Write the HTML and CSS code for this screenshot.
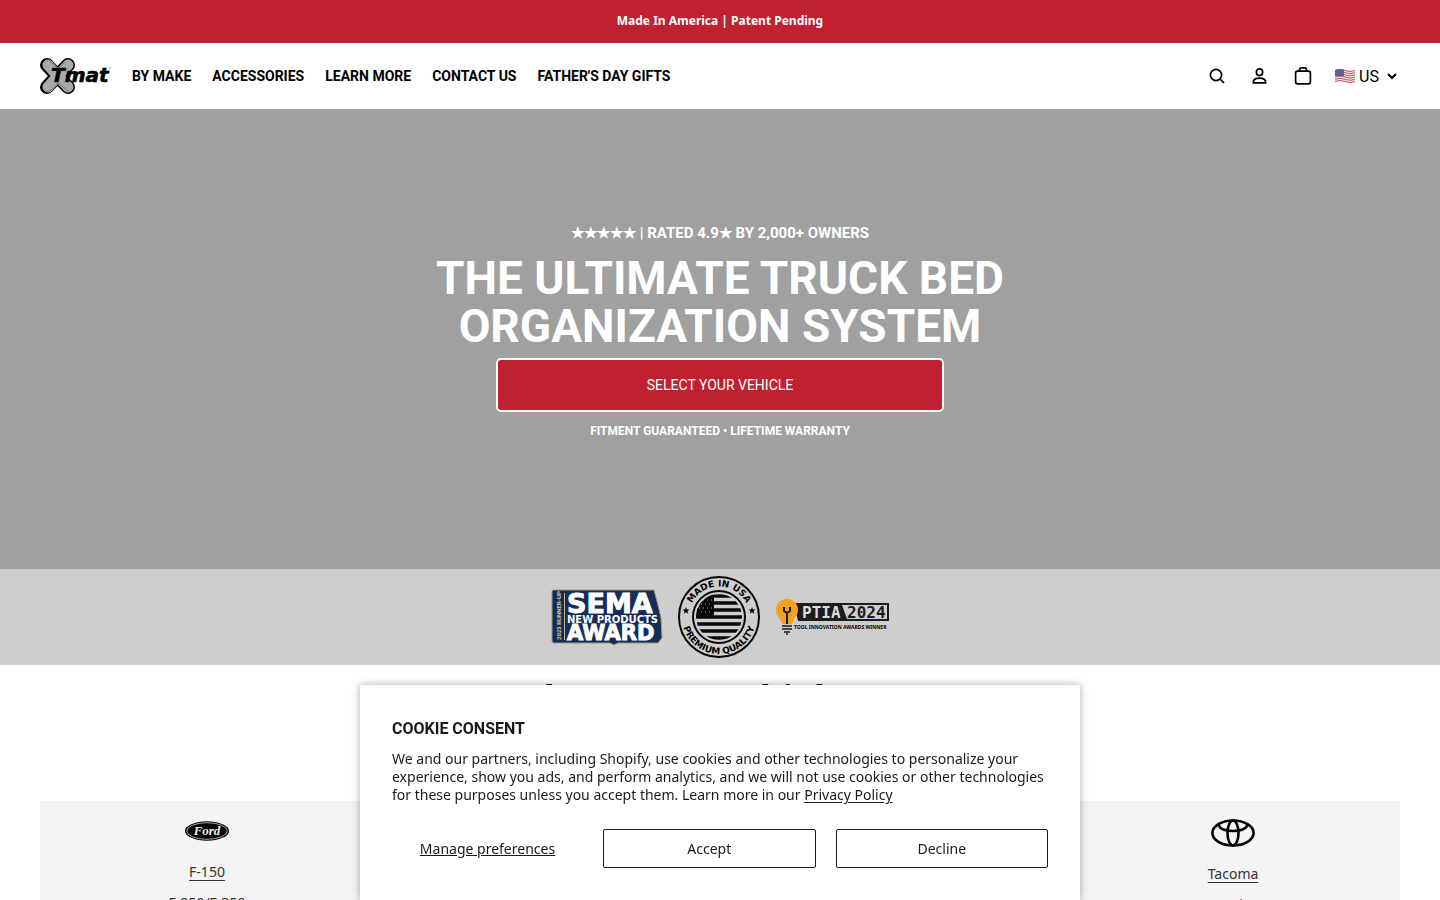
FILE: index.html
```
<!DOCTYPE html>
<html lang="en">
<head>
    <meta charset="UTF-8">
    <meta name="viewport" content="width=device-width, initial-scale=1.0">
    <title>XTmat</title>
    <link rel="stylesheet" href="styles.css">
</head>
<body>
    <div class="announcement">Made In America | Patent Pending</div>

    <header class="header">
        <a class="logo" href="#" aria-label="XTmat">
            <svg width="72" height="38" viewBox="0 0 72 38">
                <path d="M7 8L28 30M28 8L7 30" stroke="#000" stroke-width="14" stroke-linecap="round"/>
                <path d="M8 8L28 30M28 8L8 30" stroke="#aaa" stroke-width="11" stroke-linecap="round"/>
                <path d="M6 3Q9 2 12 6L18 12L25 5M6 34Q10 36 18 26L28 34" stroke="#777" fill="none"/>
                <text class="logo-text" x="11" y="25">Tmat</text>
                <circle cx="70" cy="11" r="1" fill="#bbb"/>
            </svg>
        </a>
        <nav class="nav">
            <a href="#">BY MAKE</a>
            <a href="#">ACCESSORIES</a>
            <a href="#">LEARN MORE</a>
            <a href="#">CONTACT US</a>
            <a href="#">FATHER'S DAY GIFTS</a>
        </nav>
        <div class="tools">
            <button class="icon-btn" aria-label="Search">
                <svg width="20" height="20" viewBox="0 0 20 20"><circle cx="9" cy="9" r="5.6"/><path d="M13 13l4 4"/></svg>
            </button>
            <button class="icon-btn" aria-label="Account">
                <svg width="20" height="20" viewBox="0 0 20 20"><rect x="6.4" y="2.8" width="6.2" height="6.8" rx="3"/><path d="M3.3 16.8c0-3 2.5-4.6 6.2-4.6s6.2 1.6 6.2 4.6z"/></svg>
            </button>
            <button class="icon-btn" aria-label="Cart">
                <svg width="20" height="20" viewBox="0 0 20 20"><rect x="2.6" y="5.2" width="14.8" height="12.6" rx="2"/><path d="M6.5 5V4.2Q6.5 1.9 8.5 1.9h3Q13.5 1.9 13.5 4.2V5"/></svg>
            </button>
            <div class="country">
                <svg width="20" height="14" viewBox="0 0 20 14">
                    <path fill="#f3e6e8" d="M0 1Q5-1 10 1T20 1V13Q15 15 10 13T0 13z"/>
                    <path stroke="#d0525f" fill="none" d="M0 1.5Q5-.5 10 1.5T20 1.5M0 3.7Q5 1.7 10 3.7T20 3.7M0 5.9Q5 3.9 10 5.9T20 5.9M0 8.1Q5 6.1 10 8.1T20 8.1M0 10.3Q5 8.3 10 10.3T20 10.3M0 12.5Q5 10.5 10 12.5T20 12.5"/>
                    <path fill="#5c6298" d="M0 1Q5-1 9 .7V7H0z"/>
                </svg>
                <select class="country-select" aria-label="Country">
                    <option>US</option>
                </select>
                <svg class="chevron" width="10" height="7" viewBox="0 0 10 7"><path d="M1 1l4 4 4-4"/></svg>
            </div>
        </div>
    </header>

    <section class="hero">
        <p class="rating">★★★★★ | RATED 4.9★ BY 2,000+ OWNERS</p>
        <h1>THE ULTIMATE TRUCK BED<br>ORGANIZATION SYSTEM</h1>
        <button class="hero-btn">SELECT YOUR VEHICLE</button>
        <p class="promise">FITMENT GUARANTEED • LIFETIME WARRANTY</p>
    </section>

    <section class="badges">
        <svg width="112" height="58" viewBox="0 0 112 58" role="img" aria-label="SEMA New Products Award">
            <path d="M2 2H103L107 17L110 30L111 50L107 55H67l-4 2-4-2H2L1 53V3z" fill="#132d59" stroke="#ad9466"/>
            <path d="M13.5 5V52" stroke="#c7b58c"/>
            <text class="sema-side" x="-52" y="10">2025 RUNNER-UP</text>
            <text class="sema-big" x="16" y="25">SEMA</text>
            <text class="sema-mid" x="16" y="35">NEW PRODUCTS</text>
            <text class="sema-award" x="16" y="52">AWARD</text>
        </svg>
        <svg width="84" height="84" viewBox="0 0 84 84" role="img" aria-label="Made in USA, premium quality">
            <defs>
                <path id="arc-top" d="M11.5 42a30.5 30.5 0 0 1 61 0"/>
                <path id="arc-bottom" d="M5 42a37 37 0 0 0 74 0"/>
                <clipPath id="disc"><circle cx="42" cy="42" r="23"/></clipPath>
            </defs>
            <g fill="none" stroke="#080808">
                <circle cx="42" cy="42" r="40" stroke-width="2"/>
                <circle cx="42" cy="42" r="26" stroke-width="2"/>
            </g>
            <g clip-path="url(#disc)">
                <path stroke="#080808" stroke-width="3.6" d="M18 21H66M18 28H66M18 35H66M18 42H66M18 49H66M18 56H66M18 63H66"/>
                <path fill="#080808" d="M18 18H37V42H18z"/>
                <path stroke="#999" stroke-dasharray="1 3" d="M22 25H36M24 29H36M22 33H36M24 37H36"/>
            </g>
            <path fill="#080808" d="M9 32l1 2.5h2.5l-2 1.7.8 2.6L9 37.3l-2.3 1.5.8-2.6-2-1.7H8zM75 32l1 2.5h2.5l-2 1.7.8 2.6L75 37.3l-2.3 1.5.8-2.6-2-1.7H74z"/>
            <text class="seal-text"><textPath href="#arc-top" startOffset="50%">MADE IN USA</textPath></text>
            <text class="seal-text"><textPath href="#arc-bottom" startOffset="50%">PREMIUM QUALITY</textPath></text>
        </svg>
        <svg width="114" height="40" viewBox="0 0 114 40" role="img" aria-label="PTIA 2024 Tool Innovation Awards Winner">
            <path d="M19 6H114V24H23z" fill="#1c1c1c"/>
            <path d="M67 8H112V22H72z" fill="#cecece"/>
            <path d="M12 2C5 2 1 7 1 13c0 6 5 8 6 14h10c1-6 6-8 6-14C23 7 19 2 12 2z" fill="#f6a11e"/>
            <path d="M9 10v4l3 2 3-2v-4M12 16v11" fill="none" stroke="#1c1c1c" stroke-width="2"/>
            <path d="M7 29H17M7 32H17M9 35H15M11 37H13" stroke="#1c1c1c" stroke-width="1.5"/>
            <text class="ptia" x="27" y="21">PTIA</text>
            <text class="ptia ptia-year" x="72" y="21">2024</text>
            <text class="ptia-sub" x="19" y="32">TOOL INNOVATION AWARDS WINNER</text>
        </svg>
    </section>

    <main class="vehicles">
        <h2>Select Your Vehicle Type</h2>
        <div class="makes">
            <div class="make">
                <svg width="44" height="20" viewBox="0 0 44 20" role="img" aria-label="Ford">
                    <ellipse cx="22" cy="10" rx="22" ry="9.7" fill="#050505"/>
                    <ellipse cx="22" cy="10" rx="20.3" ry="8.3" fill="none" stroke="#ccc" stroke-width=".8"/>
                    <text class="ford" x="22" y="14">Ford</text>
                </svg>
                <a href="#">F-150</a>
                <a href="#">F-250/F-350</a>
            </div>
            <div class="make"></div>
            <div class="make"></div>
            <div class="make">
                <svg width="44" height="28" viewBox="0 0 44 28" role="img" aria-label="Toyota">
                    <g fill="none" stroke="#050505" stroke-width="2.6">
                        <ellipse cx="22" cy="14" rx="20.6" ry="12.5"/>
                        <ellipse cx="22" cy="14" rx="5.5" ry="12.5"/>
                        <path d="M8 6C8 14 36 14 36 6"/>
                    </g>
                </svg>
                <a href="#">Tacoma</a>
                <a href="#">Tundra</a>
            </div>
        </div>
    </main>

    <div class="cookie" role="dialog" aria-labelledby="cookie-title">
        <h2 id="cookie-title">COOKIE CONSENT</h2>
        <p>We and our partners, including Shopify, use cookies and other technologies to personalize your experience, show you ads, and perform analytics, and we will not use cookies or other technologies for these purposes unless you accept them. Learn more in our <a href="#">Privacy Policy</a></p>
        <div class="cookie-btns">
            <button class="link-btn">Manage preferences</button>
            <button>Accept</button>
            <button>Decline</button>
        </div>
    </div>
</body>
</html>
```
FILE: styles.css
```
* {
    box-sizing: border-box;
}
body {
    margin: 0;
    font-family: Roboto, "Liberation Sans", sans-serif;
    color: #000;
    background: #fff;
}
h1, h2, p {
    margin: 0;
}
button {
    font-family: inherit;
    cursor: pointer;
}
.announcement {
    padding: 11px 20px 13px;
    font: bold 12px/19px "Noto Sans", sans-serif;
    text-align: center;
    color: #fff;
    background: #c12030;
}
.header {
    display: flex;
    align-items: center;
    height: 66px;
    padding: 0 40px;
}
.logo {
    display: flex;
    margin-right: 20px;
}
.logo-text {
    font: italic bold 20px "DejaVu Sans", sans-serif;
    stroke: #000;
    stroke-width: .6;
}
.nav {
    display: flex;
    gap: 21px;
}
.nav a {
    font-size: 14px;
    font-weight: bold;
    color: #000;
    text-decoration: none;
}
.tools {
    display: flex;
    align-items: center;
    margin-left: auto;
}
.icon-btn {
    display: flex;
    justify-content: center;
    width: 43px;
    padding: 0;
    border: 0;
    background: none;
}
.icon-btn svg, .chevron {
    fill: none;
    stroke: #000;
    stroke-width: 1.7;
}
.country {
    display: flex;
    align-items: center;
    gap: 4px;
    margin: 0 3px 0 11px;
}
.country-select {
    width: 24px;
    padding: 0;
    border: 0;
    font: 16px Roboto, sans-serif;
    color: #000;
    background: none;
    appearance: none;
}
.chevron {
    stroke-width: 2;
}
.hero {
    display: flex;
    flex-direction: column;
    align-items: center;
    min-height: 460px;
    padding: 114px 20px 0;
    text-align: center;
    color: #fff;
    background: #a0a0a0;
}
.rating {
    font-size: 15px;
    font-weight: bold;
    line-height: 20px;
}
.hero h1 {
    margin: 11px 0 8px;
    font-size: 46px;
    line-height: 48px;
}
.hero-btn {
    width: 100%;
    max-width: 448px;
    height: 54px;
    border: 2px solid #fff;
    border-radius: 5px;
    font-size: 14px;
    color: #fff;
    background: #c12030;
}
.promise {
    margin-top: 10px;
    font-size: 12px;
    font-weight: bold;
    line-height: 18px;
}
.badges {
    display: flex;
    justify-content: center;
    align-items: center;
    gap: 14px;
    height: 96px;
    background: #cecece;
}
.sema-side {
    font: bold 6px Roboto, sans-serif;
    fill: #dcc997;
    transform: rotate(-90deg);
}
.sema-big, .sema-mid, .sema-award {
    font: bold 27px "DejaVu Sans", sans-serif;
    fill: #fff;
}
.sema-big {
    stroke: #fff;
}
.sema-mid {
    font-size: 10px;
}
.sema-award {
    font-size: 21px;
    stroke: #fff;
}
.seal-text {
    font: bold 9px "DejaVu Sans", sans-serif;
    text-anchor: middle;
}
.ptia {
    font: bold 16px "DejaVu Sans Mono", monospace;
    fill: #ddd;
}
.ptia-year {
    fill: #1c1c1c;
}
.ptia-sub {
    font: bold 5px "Noto Sans", sans-serif;
}
.vehicles {
    padding: 12px 40px 0;
}
.vehicles h2 {
    font-size: 40px;
    line-height: 48px;
    text-align: center;
}
.makes {
    display: grid;
    grid-template-columns: repeat(4, 1fr);
    gap: 8px;
    margin-top: 76px;
}
.make {
    display: flex;
    flex-direction: column;
    align-items: center;
    padding: 20px;
    background: #f4f4f4;
}
.make svg {
    margin-bottom: 17px;
}
.make:last-child {
    padding-top: 18px;
}
.make:last-child svg {
    margin-bottom: 13px;
}
.make a {
    margin: 4px 0 8px;
    font: 14px/19px "Noto Sans", sans-serif;
    color: #333;
    text-underline-offset: 3px;
}
.ford {
    font: italic bold 13px "Liberation Serif", serif;
    fill: #eee;
    text-anchor: middle;
}
.cookie {
    position: fixed;
    bottom: 0;
    left: 50%;
    width: 100%;
    max-width: 720px;
    padding: 32px;
    transform: translateX(-50%);
    color: #1a1a1a;
    background: #fff;
    box-shadow: 0 0 8px rgba(0, 0, 0, .35);
}
.cookie h2 {
    margin-bottom: 9px;
    font-size: 16px;
    line-height: 24px;
}
.cookie p {
    font: 14px/18px "Noto Sans", sans-serif;
}
.cookie a {
    color: inherit;
    text-underline-offset: 2px;
}
.cookie-btns {
    display: grid;
    grid-template-columns: 191px 1fr 1fr;
    gap: 20px;
    margin-top: 25px;
}
.cookie-btns button {
    height: 39px;
    border: 1px solid #1a1a1a;
    border-radius: 2px;
    font: 14px "Noto Sans", sans-serif;
    color: #1a1a1a;
    background: #fff;
}
.cookie-btns .link-btn {
    padding: 0;
    border: 0;
    text-decoration: underline;
}
```
